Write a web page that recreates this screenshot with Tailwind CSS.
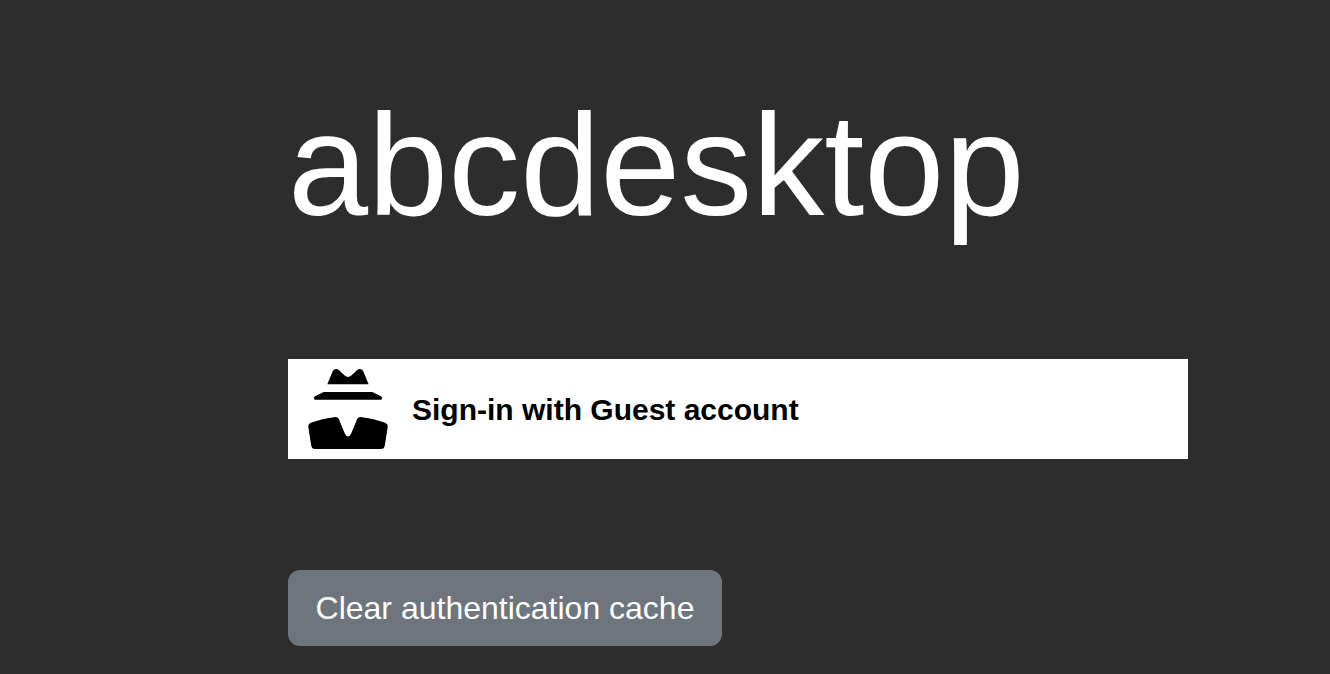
<!DOCTYPE html>
<html lang="en">
<head>
    <meta charset="UTF-8">
    <meta name="viewport" content="width=device-width, initial-scale=1.0">
    <title>abcdesktop</title>
    <script src="https://cdn.jsdelivr.net/npm/@tailwindcss/browser@4"></script>
</head>
<body class="min-h-screen bg-[#2d2d2d] text-white font-['Liberation_Sans',Arial,sans-serif]">

    <main class="flex flex-col items-start pl-72 pr-[142px] pt-20 pb-7">
        <h1 class="text-[144px] leading-[172px]">abcdesktop</h1>

        <button type="button" class="mt-[107px] flex h-[100px] w-full items-center gap-6 bg-white px-5 text-left text-[30px] font-bold text-black">
            <svg xmlns="http://www.w3.org/2000/svg" class="size-20 shrink-0" viewBox="0 0 80 80" fill="currentColor" aria-hidden="true">
                <path d="M19.3 15.3 24.2 3.4C25.4.2 28.3-.9 31 1.2L36.4 6.2Q40 9.6 43.6 6.2L49 1.2C51.7-.9 54.6.2 55.8 3.4L60.6 15.3Z"/>
                <path d="M15.7 23H64.3L72.9 27.2Q74 27.8 74 29.2 74 30.8 72.4 30.8H7.6Q6 30.8 6 29.2 6 27.8 7.1 27.2Z"/>
                <path d="M3.6 53.4Q15 49.2 27.4 48Q29.8 47.8 30.9 50.2L36.8 64.4Q38.2 67.4 40 67.4 41.8 67.4 43.2 64.4L49.1 50.2Q50.2 47.8 52.6 48 65 49.2 76.4 53.4 80.2 54.8 79.7 58L76.8 76.5Q76.2 80 73 80H7Q3.8 80 3.2 76.5L.3 58Q-.2 54.8 3.6 53.4Z"/>
            </svg>
            <span>Sign-in with Guest account</span>
        </button>

        <button type="button" class="mt-[111px] min-w-[434px] rounded-xl border-2 border-[#6f757d] bg-[#6f757d] px-6 py-3 text-[32px] leading-[48px]">Clear authentication cache</button>
    </main>

</body>
</html>
